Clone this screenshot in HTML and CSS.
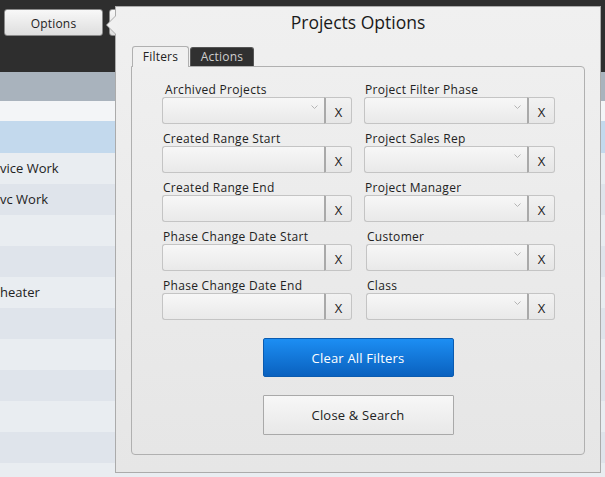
FILE: index.html
```html
<!DOCTYPE html>
<html>
<head>
<meta charset="utf-8">
<link rel="stylesheet" href="styles.css">
</head>
<body>
<div class="page">
  <div class="topbar">
    <button class="btn-top">Options</button>
    <button class="btn-top btn-behind">Columns</button>
  </div>
  <div class="grid">
    <div class="grid-head"></div>
    <div class="grow blank"></div>
    <div class="grow sel"></div>
    <div class="grow odd">vice Work</div>
    <div class="grow even">vc Work</div>
    <div class="grow odd"></div>
    <div class="grow even"></div>
    <div class="grow odd">heater</div>
    <div class="grow even"></div>
    <div class="grow odd"></div>
    <div class="grow even"></div>
    <div class="grow odd"></div>
    <div class="grow even"></div>
    <div class="grow odd"></div>
  </div>

  <div class="panel">
    <h1 class="panel-title">Projects Options</h1>
    <div class="tabs">
      <div class="tab active">Filters</div>
      <div class="tab dark">Actions</div>
    </div>
    <div class="tabbox">
      <div class="fields">
        <div class="field">
          <label class="lbl lbl-wide">Archived Projects</label>
          <div class="ctl"><div class="inp"><svg class="chev" width="7" height="4" viewBox="0 0 7 4"><polyline points="0.5,0.5 3.5,3.5 6.5,0.5" fill="none" stroke="#b4b4b4" stroke-width="1"/></svg></div><button class="xbtn">X</button></div>
        </div>
        <div class="field">
          <label class="lbl">Project Filter Phase</label>
          <div class="ctl"><div class="inp"><svg class="chev" width="7" height="4" viewBox="0 0 7 4"><polyline points="0.5,0.5 3.5,3.5 6.5,0.5" fill="none" stroke="#b4b4b4" stroke-width="1"/></svg></div><button class="xbtn">X</button></div>
        </div>
        <div class="field">
          <label class="lbl">Created Range Start</label>
          <div class="ctl"><div class="inp"></div><button class="xbtn">X</button></div>
        </div>
        <div class="field">
          <label class="lbl">Project Sales Rep</label>
          <div class="ctl"><div class="inp"><svg class="chev" width="7" height="4" viewBox="0 0 7 4"><polyline points="0.5,0.5 3.5,3.5 6.5,0.5" fill="none" stroke="#b4b4b4" stroke-width="1"/></svg></div><button class="xbtn">X</button></div>
        </div>
        <div class="field">
          <label class="lbl">Created Range End</label>
          <div class="ctl"><div class="inp"></div><button class="xbtn">X</button></div>
        </div>
        <div class="field">
          <label class="lbl">Project Manager</label>
          <div class="ctl"><div class="inp"><svg class="chev" width="7" height="4" viewBox="0 0 7 4"><polyline points="0.5,0.5 3.5,3.5 6.5,0.5" fill="none" stroke="#b4b4b4" stroke-width="1"/></svg></div><button class="xbtn">X</button></div>
        </div>
        <div class="field">
          <label class="lbl">Phase Change Date Start</label>
          <div class="ctl"><div class="inp"></div><button class="xbtn">X</button></div>
        </div>
        <div class="field shifted">
          <label class="lbl">Customer</label>
          <div class="ctl"><div class="inp"><svg class="chev" width="7" height="4" viewBox="0 0 7 4"><polyline points="0.5,0.5 3.5,3.5 6.5,0.5" fill="none" stroke="#b4b4b4" stroke-width="1"/></svg></div><button class="xbtn">X</button></div>
        </div>
        <div class="field">
          <label class="lbl">Phase Change Date End</label>
          <div class="ctl"><div class="inp"></div><button class="xbtn">X</button></div>
        </div>
        <div class="field shifted">
          <label class="lbl">Class</label>
          <div class="ctl"><div class="inp"><svg class="chev" width="7" height="4" viewBox="0 0 7 4"><polyline points="0.5,0.5 3.5,3.5 6.5,0.5" fill="none" stroke="#b4b4b4" stroke-width="1"/></svg></div><button class="xbtn">X</button></div>
        </div>
      </div>
      <div class="actions">
        <button class="btn-blue">Clear All Filters</button>
        <button class="btn-grey">Close &amp; Search</button>
      </div>
    </div>
  </div>
</div>
</body>
</html>
```

FILE: styles.css
```css
* { box-sizing: border-box; }
html, body { margin: 0; padding: 0; }
body {
  width: 605px;
  height: 477px;
  overflow: hidden;
  font-family: "Open Sans", "Liberation Sans", sans-serif;
  font-size: 12px;
  color: #222;
  background: #e9edf1;
}
.page { position: relative; width: 605px; height: 477px; overflow: hidden; }

.topbar {
  height: 72px;
  background: #2e2e2e;
  padding: 9px 4px 0 4px;
  display: flex;
  gap: 6px;
  align-items: flex-start;
}
.btn-top {
  width: 99px;
  height: 27px;
  border: 1px solid #8a8a8a;
  border-radius: 3px;
  background: linear-gradient(#f8f8f8, #dedede);
  font-family: inherit;
  font-size: 12px;
  letter-spacing: 0.2px;
  color: #222;
  padding: 2px 0 0 0;
}
.btn-behind { width: 90px; }

.grid { display: flex; flex-direction: column; }
.grid-head { height: 29px; background: #a9b3bd; }
.grow {
  height: 31px;
  font-size: 13px;
  line-height: 31px;
  color: #222;
  white-space: nowrap;
}
.grow.blank { height: 20px; background: #f3f5f7; }
.grow.sel { height: 32px; background: #c3d9ed; }
.grow.odd { background: #e9edf1; }
.grow.even { background: #dfe4eb; }

.panel {
  position: absolute;
  left: 115px;
  top: 6px;
  width: 486px;
  height: 467px;
  border: 1px solid #ababab;
  background: linear-gradient(#f0f0f0, #e6e6e6);
  padding: 0 15px 0 15px;
}
.panel::before {
  content: "";
  position: absolute;
  left: -10px;
  top: 8px;
  border-style: solid;
  border-width: 10px 10px 10px 0;
  border-color: transparent #ababab transparent transparent;
}
.panel::after {
  content: "";
  position: absolute;
  left: -9px;
  top: 8px;
  border-style: solid;
  border-width: 10px 10px 10px 0;
  border-color: transparent #f0f0f0 transparent transparent;
}
.panel-title {
  margin: 0;
  padding-top: 3px;
  height: 39px;
  font-weight: normal;
  font-size: 17.5px;
  line-height: 24px;
  text-align: center;
  color: #1a1a1a;
}

.tabs {
  display: flex;
  gap: 1px;
  padding-left: 1px;
  height: 21px;
  margin-bottom: -1px;
  position: relative;
  z-index: 1;
  align-items: flex-start;
}
.tab {
  height: 21px;
  padding: 0 14px;
  line-height: 20px;
  font-size: 12px;
  letter-spacing: 0.2px;
  border: 1px solid #b0b0b0;
  border-bottom: none;
  border-radius: 3px 3px 0 0;
}
.tab.active {
  background: #f0f0f0;
  width: 57px;
  padding: 0;
  text-align: center;
}
.tab.dark {
  margin-top: 1px;
  height: 19px;
  line-height: 18px;
  width: 64px;
  padding: 0;
  text-align: center;
  background: #303030;
  border-color: #555;
  color: #cfcfcf;
}

.tabbox {
  height: 389px;
  border: 1px solid #b0b0b0;
  border-radius: 0 4px 4px 4px;
  background: linear-gradient(#efefef, #e6e6e6);
  padding: 16px 0 0 30px;
}
.fields {
  display: grid;
  grid-template-columns: 190px 191px;
  column-gap: 12px;
  row-gap: 8px;
}
.field { display: flex; flex-direction: column; }
.field.shifted { margin-left: 2px; }
.lbl {
  height: 14px;
  line-height: 14px;
  padding-left: 1px;
  font-size: 12px;
  letter-spacing: 0.3px;
  color: #222;
  white-space: nowrap;
}
.lbl-wide { padding-left: 3px; }
.ctl { display: flex; height: 27px; }
.inp {
  flex: 1;
  position: relative;
  border: 1px solid #c4c4c4;
  border-right: none;
  border-radius: 3px 0 0 3px;
  background: linear-gradient(#f7f7f7, #e9e9e9);
}
.chev { position: absolute; right: 6px; top: 7px; }
.xbtn {
  width: 28px;
  height: 27px;
  padding: 2px 0 0 0;
  border: 1px solid #c4c4c4;
  border-left: 2px solid #a9a9a9;
  border-radius: 0 3px 3px 0;
  background: linear-gradient(#f2f2f2, #e6e6e6);
  font-family: inherit;
  font-size: 13px;
  color: #222;
}

.actions {
  display: flex;
  flex-direction: column;
  align-items: center;
  gap: 18px;
  margin-top: 18px;
  margin-left: -30px;
}
.btn-blue {
  width: 191px;
  height: 39px;
  border: 1px solid #0a5bb0;
  border-radius: 2px;
  background: linear-gradient(#1c8ef3, #0a61bf);
  color: #fff;
  font-family: inherit;
  font-size: 13px;
  letter-spacing: 0.2px;
}
.btn-grey {
  width: 191px;
  height: 40px;
  border: 1px solid #a9a9a9;
  border-radius: 1px;
  background: linear-gradient(#f7f7f7, #e8e8e8);
  color: #222;
  font-family: inherit;
  font-size: 13px;
  letter-spacing: 0.2px;
}
```
